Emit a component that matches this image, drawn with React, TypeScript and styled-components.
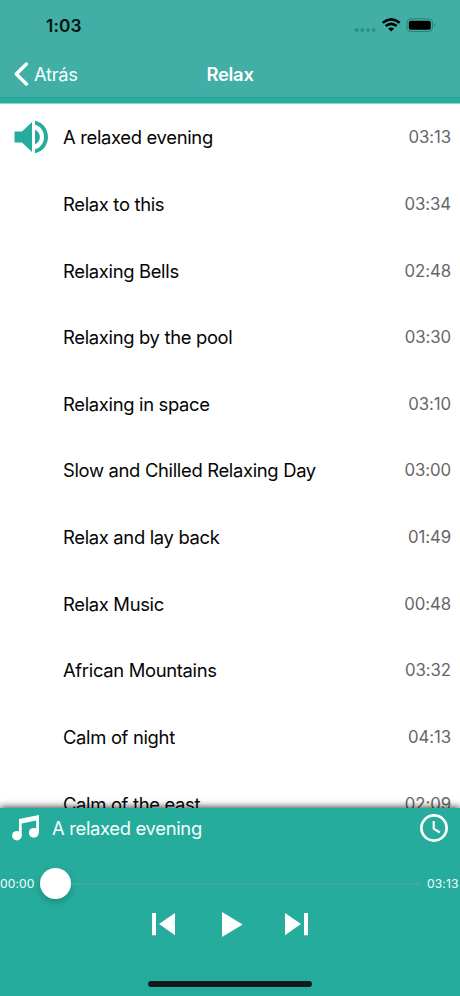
import React from 'react';
import styled, { createGlobalStyle } from 'styled-components';

const GlobalStyle = createGlobalStyle`
  * { box-sizing: border-box; }
  body { margin: 0; background: #fff; }
`;

const Screen = styled.div`
  width: 460px;
  height: 996px;
  display: flex;
  flex-direction: column;
  overflow: hidden;
  background: #fff;
  color: #050505;
  font-family: Inter, "Liberation Sans", sans-serif;
`;

const Header = styled.header`
  height: 104px;
  flex: none;
  background: #41afa6;
  display: flex;
  flex-direction: column;
`;

const StatusBar = styled.div`
  height: 50px;
  padding: 1px 22px 0 46px;
  display: flex;
  align-items: center;
  justify-content: space-between;
`;

const Clock = styled.span`
  font-size: 17.3px;
  font-weight: 600;
  letter-spacing: 0.1px;
  color: #04110f;
`;

const StatusIcons = styled.svg`
  width: 84px;
  height: 18px;
  display: block;
`;

const NavBar = styled.nav`
  height: 47px;
  display: grid;
  grid-template-columns: 1fr auto 1fr;
  align-items: center;
  padding: 0 14px;
  color: #fff;
`;

const BackButton = styled.button`
  border: 0;
  padding: 0;
  background: none;
  color: #f2fffc;
  display: flex;
  align-items: center;
  gap: 5px;
  font: 400 18.4px Inter, sans-serif;
  letter-spacing: -0.35px;
  justify-self: start;

  svg { display: block; }
`;

const NavTitle = styled.h1`
  margin: 0;
  font-size: 18.4px;
  font-weight: 600;
  letter-spacing: -0.25px;
`;

const HeaderEdge = styled.div`
  height: 7px;
  background: #26ac9c;
  border-top: 1px solid #239e90;
  border-bottom: 1px solid #8fd5cc;
`;

const TrackList = styled.ul`
  flex: 1;
  min-height: 0;
  margin: 0;
  padding: 0;
  list-style: none;
  overflow: hidden;
`;

const Track = styled.li`
  height: 66.64px;
  display: grid;
  grid-template-columns: 49px 1fr auto;
  align-items: center;
  padding: 0 9px 0 14px;

  svg { display: block; }
`;

const TrackTitle = styled.span`
  font-size: 18.4px;
  letter-spacing: -0.32px;
  white-space: nowrap;
`;

const Duration = styled.span`
  font-size: 16.8px;
  color: #666;
  letter-spacing: -0.1px;
`;

const Player = styled.section`
  position: relative;
  flex: none;
  height: 188px;
  background: #26ac9c;
  color: #f4fffd;
  box-shadow: 0 -1px 7px rgba(0, 0, 0, 0.75);
  display: flex;
  flex-direction: column;
`;

const NowPlaying = styled.div`
  height: 40px;
  padding: 0 12px 0 12px;
  display: grid;
  grid-template-columns: 40px 1fr auto;
  align-items: center;

  svg { display: block; }
`;

const SeekRow = styled.div`
  height: 63px;
  padding-top: 7px;
  display: flex;
  align-items: center;
  justify-content: space-between;
`;

const SeekTime = styled.span`
  width: 40px;
  flex: none;
  font-size: 12.1px;
  letter-spacing: 0.1px;
  &:last-child { width: 33px; margin-left: 6px; }
`;

const SeekTrack = styled.div`
  flex: 1;
  height: 31px;
  display: flex;
  align-items: center;
`;

const Knob = styled.div`
  width: 31px;
  height: 31px;
  flex: none;
  border-radius: 50%;
  background: #fff;
  box-shadow: 0 3px 7px rgba(0, 0, 0, 0.2);
`;

const Rail = styled.div`
  flex: 1;
  height: 2px;
  margin-top: 2px;
  background: #45a69c;
`;

const Controls = styled.div`
  height: 32px;
  display: grid;
  grid-template-columns: 70px 63px 24px;
  justify-content: center;

  svg { display: block; fill: #fff; }
`;

const HomeIndicator = styled.div`
  width: 164px;
  height: 6px;
  margin: auto auto 9px;
  border-radius: 3px;
  background: #101b1e;
`;

const tracks = [
  { title: 'A relaxed evening', time: '03:13' },
  { title: 'Relax to this', time: '03:34' },
  { title: 'Relaxing Bells', time: '02:48' },
  { title: 'Relaxing by the pool', time: '03:30' },
  { title: 'Relaxing in space', time: '03:10' },
  { title: 'Slow and Chilled Relaxing Day', time: '03:00' },
  { title: 'Relax and lay back', time: '01:49' },
  { title: 'Relax Music', time: '00:48' },
  { title: 'African Mountains', time: '03:32' },
  { title: 'Calm of night', time: '04:13' },
  { title: 'Calm of the east', time: '02:09' },
];

const SpeakerIcon = () => (
  <svg width="35" height="34" viewBox="0 0 35 34" fill="#26ac9c">
    <path d="M0.5 11.5H8L18 2v30L8 22.5H.5Z" />
    <path d="M21 9.5c6.5 3 6.5 12 0 15Z" />
    <path d="M21 .8c17.3 3.5 17.3 28.9 0 32.4v-4c12-3 12-21.4 0-24.4Z" />
  </svg>
);

export default function App() {
  return (
    <Screen>
      <GlobalStyle />
      <Header>
        <StatusBar>
          <Clock>1:03</Clock>
          <StatusIcons viewBox="0 0 84 18">
            <g fill="#2b9085">
              <circle cx="2.8" cy="13" r="2" />
              <circle cx="8.3" cy="13" r="2" />
              <circle cx="14" cy="13" r="2" />
              <circle cx="19.6" cy="13" r="2" />
            </g>
            <g fill="none" stroke="#000" strokeWidth="2.6">
              <path d="M28.7 5.8q8.5-6.8 17 0" />
              <path d="M31.7 9q5.5-4.4 11 0" />
            </g>
            <path d="M34.2 11.6q3-2.2 6 0L37.2 14.6Z" />
            <rect x="53" y="1.8" width="25.5" height="12.7" rx="3.8" fill="none" stroke="#278277" />
            <rect x="54.8" y="3.7" width="22" height="9" rx="2" />
            <path d="M80 6.3q2.8 1.8 0 3.8Z" fill="#278277" />
          </StatusIcons>
        </StatusBar>
        <NavBar>
          <BackButton>
            <svg width="15" height="24" viewBox="0 0 15 24" fill="none" stroke="#fff" strokeWidth="3.4" strokeLinecap="round" strokeLinejoin="round">
              <path d="M12.4 2 2.3 12l10.1 10" />
            </svg>
            Atrás
          </BackButton>
          <NavTitle>Relax</NavTitle>
        </NavBar>
        <HeaderEdge />
      </Header>
      <TrackList>
        {tracks.map((t, i) => (
          <Track key={t.title}>
            <span>{i === 0 && <SpeakerIcon />}</span>
            <TrackTitle>{t.title}</TrackTitle>
            <Duration>{t.time}</Duration>
          </Track>
        ))}
      </TrackList>
      <Player>
        <NowPlaying>
          <svg width="28" height="26" viewBox="0 0 28 26" fill="#fff">
            <path d="M7 4 27 0v17.5h-2.8V5.6L9.7 8.6V21H7Z" />
            <circle cx="4.9" cy="20.7" r="4.8" />
            <circle cx="21.8" cy="17.8" r="4.9" />
          </svg>
          <TrackTitle>A relaxed evening</TrackTitle>
          <svg width="28" height="28" viewBox="0 0 28 28" fill="none" stroke="#fff">
            <circle cx="14" cy="14" r="12.6" strokeWidth="2.7" />
            <path d="M13.7 7v7.7l6.2 3.8" strokeWidth="2.1" />
          </svg>
        </NowPlaying>
        <SeekRow>
          <SeekTime>00:00</SeekTime>
          <SeekTrack><Knob /><Rail /></SeekTrack>
          <SeekTime>03:13</SeekTime>
        </SeekRow>
        <Controls>
          <svg width="24" height="26" viewBox="0 0 24 26"><path d="M0 2h4v22.2H0ZM23 2v22.2L7 13Z" /></svg>
          <svg width="21" height="26" viewBox="0 0 21 26"><path d="M0 1v25l20.7-12.5Z" /></svg>
          <svg width="24" height="26" viewBox="0 0 24 26"><path d="M0 2v22.2l16-11.2ZM19 2h4v22.2h-4Z" /></svg>
        </Controls>
        <HomeIndicator />
      </Player>
    </Screen>
  );
}
